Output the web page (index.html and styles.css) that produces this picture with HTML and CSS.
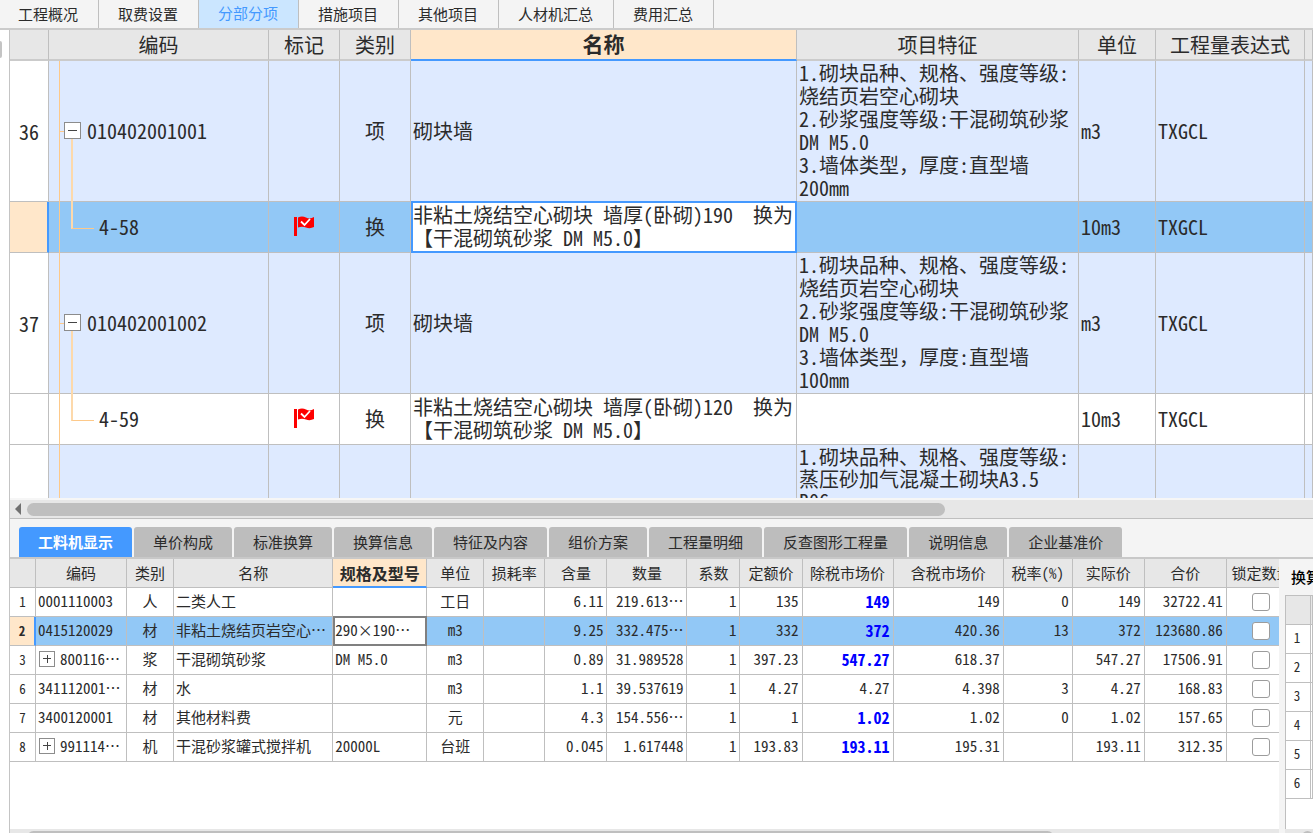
FILE: index.html
```html
<!DOCTYPE html>
<html lang="zh-CN">
<head>
<meta charset="utf-8">
<title>分部分项</title>
<link rel="stylesheet" href="styles.css">
</head>
<body>
<svg class="defs" width="0" height="0" aria-hidden="true">
  <symbol id="flag" viewBox="0 0 20 20">
    <path d="M0 1h3v19H0z" fill="#fe0000"/>
    <path d="M4 1.500Q8-.5 12 1.500T20 1V11Q16 13 12 11.500T4 11.500Z" fill="#fe0000"/>
    <path d="M7 5.500l3.500 3.500L16 3" fill="none" stroke="#fff" stroke-width="1.800"/>
  </symbol>
</svg>
<div class="app">
  <nav class="top-tabs">
    <button class="top-tab">工程概况</button>
    <button class="top-tab">取费设置</button>
    <button class="top-tab active">分部分项</button>
    <button class="top-tab">措施项目</button>
    <button class="top-tab">其他项目</button>
    <button class="top-tab">人材机汇总</button>
    <button class="top-tab">费用汇总</button>
  </nav>

  <div class="workspace">
    <aside class="gutter"><span class="grip"></span></aside>
    <main class="panes">
      <div class="items-view">
        <table class="grid items">
          <colgroup><col class="w-39"><col class="w-220"><col class="w-71"><col class="w-71"><col><col class="w-282"><col class="w-77"><col class="w-149"><col class="w-8"></colgroup>
          <thead><tr><th></th><th>编码</th><th>标记</th><th>类别</th><th class="current">名称</th><th>项目特征</th><th>单位</th><th>工程量表达式</th><th></th></tr></thead>
          <tbody>
            <tr class="tall group">
              <td class="num">36</td>
              <td class="tree parent"><div class="node"><button class="toggle minus" aria-label="折叠"></button>010402001001</div></td>
              <td></td><td class="mid">项</td><td>砌块墙</td>
              <td>1.砌块品种、规格、强度等级:<br>烧结页岩空心砌块<br>2.砂浆强度等级:干混砌筑砂浆<br>DM M5.0<br>3.墙体类型，厚度:直型墙<br>200mm</td>
              <td>m3</td><td>TXGCL</td><td></td>
            </tr>
            <tr class="short selected">
              <td class="num"></td>
              <td class="tree child">4-58</td>
              <td class="mid"><svg class="flag"><use href="#flag"/></svg></td><td class="mid">换</td>
              <td class="focus">非粘土烧结空心砌块 墙厚(卧砌)190&nbsp; 换为<br>【干混砌筑砂浆 DM M5.0】</td>
              <td></td><td>10m3</td><td>TXGCL</td><td></td>
            </tr>
            <tr class="tall group">
              <td class="num">37</td>
              <td class="tree parent"><div class="node"><button class="toggle minus" aria-label="折叠"></button>010402001002</div></td>
              <td></td><td class="mid">项</td><td>砌块墙</td>
              <td>1.砌块品种、规格、强度等级:<br>烧结页岩空心砌块<br>2.砂浆强度等级:干混砌筑砂浆<br>DM M5.0<br>3.墙体类型，厚度:直型墙<br>100mm</td>
              <td>m3</td><td>TXGCL</td><td></td>
            </tr>
            <tr class="short">
              <td class="num"></td>
              <td class="tree child">4-59</td>
              <td class="mid"><svg class="flag"><use href="#flag"/></svg></td><td class="mid">换</td>
              <td>非粘土烧结空心砌块 墙厚(卧砌)120&nbsp; 换为<br>【干混砌筑砂浆 DM M5.0】</td>
              <td></td><td>10m3</td><td>TXGCL</td><td></td>
            </tr>
            <tr class="tall group">
              <td class="num"></td><td class="tree"></td><td></td><td></td><td></td>
              <td class="top">1.砌块品种、规格、强度等级:<br>蒸压砂加气混凝土砌块A3.5<br>B06</td>
              <td></td><td></td><td></td>
            </tr>
          </tbody>
        </table>
      </div>
      <div class="scrollbar">
        <svg class="arrow" viewBox="0 0 6 12"><path d="M6 0v12L0 6z"/></svg>
        <span class="thumb items-thumb"></span>
      </div>

      <nav class="detail-tabs">
        <button class="detail-tab active">工料机显示</button>
        <button class="detail-tab">单价构成</button>
        <button class="detail-tab">标准换算</button>
        <button class="detail-tab">换算信息</button>
        <button class="detail-tab">特征及内容</button>
        <button class="detail-tab">组价方案</button>
        <button class="detail-tab">工程量明细</button>
        <button class="detail-tab">反查图形工程量</button>
        <button class="detail-tab">说明信息</button>
        <button class="detail-tab">企业基准价</button>
      </nav>

      <div class="detail">
        <section class="resources">
          <div class="resources-view">
            <table class="grid fine res">
              <colgroup><col class="w-26"><col class="w-91"><col class="w-47"><col class="w-159"><col class="w-94"><col class="w-57"><col class="w-61"><col class="w-62"><col class="w-80"><col class="w-53"><col class="w-62"><col class="w-91"><col class="w-110"><col class="w-69"><col class="w-72"><col class="w-82"><col class="w-70"></colgroup>
              <thead><tr><th></th><th>编码</th><th>类别</th><th>名称</th><th class="current">规格及型号</th><th>单位</th><th>损耗率</th><th>含量</th><th>数量</th><th>系数</th><th>定额价</th><th>除税市场价</th><th>含税市场价</th><th>税率(%)</th><th>实际价</th><th>合价</th><th>锁定数量</th></tr></thead>
              <tbody>
                <tr><td class="num">1</td><td>0001110003</td><td class="mid">人</td><td>二类人工</td><td></td><td class="mid">工日</td><td></td><td class="right">6.11</td><td class="right">219.613…</td><td class="right">1</td><td class="right">135</td><td class="right price">149</td><td class="right">149</td><td class="right">0</td><td class="right">149</td><td class="right">32722.41</td><td class="mid"><input type="checkbox" class="lock" aria-label="锁定数量"></td></tr>
                <tr class="selected"><td class="num">2</td><td>0415120029</td><td class="mid">材</td><td>非粘土烧结页岩空心…</td><td class="focus">290×190…</td><td class="mid">m3</td><td></td><td class="right">9.25</td><td class="right">332.475…</td><td class="right">1</td><td class="right">332</td><td class="right price">372</td><td class="right">420.36</td><td class="right">13</td><td class="right">372</td><td class="right">123680.86</td><td class="mid"><input type="checkbox" class="lock" aria-label="锁定数量"></td></tr>
                <tr><td class="num">3</td><td><div class="node"><button class="toggle plus" aria-label="展开"></button>800116…</div></td><td class="mid">浆</td><td>干混砌筑砂浆</td><td>DM M5.0</td><td class="mid">m3</td><td></td><td class="right">0.89</td><td class="right">31.989528</td><td class="right">1</td><td class="right">397.23</td><td class="right price">547.27</td><td class="right">618.37</td><td></td><td class="right">547.27</td><td class="right">17506.91</td><td class="mid"><input type="checkbox" class="lock" aria-label="锁定数量"></td></tr>
                <tr><td class="num">6</td><td>341112001…</td><td class="mid">材</td><td>水</td><td></td><td class="mid">m3</td><td></td><td class="right">1.1</td><td class="right">39.537619</td><td class="right">1</td><td class="right">4.27</td><td class="right">4.27</td><td class="right">4.398</td><td class="right">3</td><td class="right">4.27</td><td class="right">168.83</td><td class="mid"><input type="checkbox" class="lock" aria-label="锁定数量"></td></tr>
                <tr><td class="num">7</td><td>3400120001</td><td class="mid">材</td><td>其他材料费</td><td></td><td class="mid">元</td><td></td><td class="right">4.3</td><td class="right">154.556…</td><td class="right">1</td><td class="right">1</td><td class="right price">1.02</td><td class="right">1.02</td><td class="right">0</td><td class="right">1.02</td><td class="right">157.65</td><td class="mid"><input type="checkbox" class="lock" aria-label="锁定数量"></td></tr>
                <tr><td class="num">8</td><td><div class="node"><button class="toggle plus" aria-label="展开"></button>991114…</div></td><td class="mid">机</td><td>干混砂浆罐式搅拌机</td><td>20000L</td><td class="mid">台班</td><td></td><td class="right">0.045</td><td class="right">1.617448</td><td class="right">1</td><td class="right">193.83</td><td class="right price">193.11</td><td class="right">195.31</td><td></td><td class="right">193.11</td><td class="right">312.35</td><td class="mid"><input type="checkbox" class="lock" aria-label="锁定数量"></td></tr>
              </tbody>
            </table>
          </div>
          <div class="scrollbar clipped"><span class="thumb res-thumb"></span></div>
        </section>
        <section class="convert">
          <h2 class="convert-title">换算列表</h2>
          <div class="convert-view">
            <table class="grid fine conv">
              <colgroup><col class="w-25"><col></colgroup>
              <thead><tr><th></th><th></th></tr></thead>
              <tbody>
                <tr><td class="num">1</td><td></td></tr>
                <tr><td class="num">2</td><td></td></tr>
                <tr><td class="num">3</td><td></td></tr>
                <tr><td class="num">4</td><td></td></tr>
                <tr><td class="num">5</td><td></td></tr>
                <tr><td class="num">6</td><td></td></tr>
              </tbody>
            </table>
          </div>
          <div class="scrollbar clipped"><span class="thumb conv-thumb"></span></div>
        </section>
      </div>
    </main>
  </div>
</div>
</body>
</html>
```
FILE: styles.css
```css
* { box-sizing: border-box; }

body {
  margin: 0;
  color: #2b2b2b;
  background: #fff;
  font-family: "Noto Sans Mono CJK SC", "Noto Sans CJK SC", sans-serif;
}

button {
  margin: 0;
  border: 0;
  font: inherit;
  color: inherit;
  white-space: nowrap;
}

.defs { position: absolute; }

.app {
  display: flex;
  flex-direction: column;
  height: 100vh;
  overflow: hidden;
}

/* Top tabs */
.top-tabs {
  display: flex;
  flex: none;
  height: 30px;
  background: #f4f4f4;
  border-bottom: 2px solid #cbcbcb;
  font-family: "Noto Sans CJK SC", sans-serif;
  font-size: 15px;
  line-height: 26px;
}
.top-tab {
  padding: 0 20px 1px 19px;
  background: none;
  border-right: 1px solid #bfbfbf;
}
.top-tab:first-child { padding-left: 18px; }
.top-tab.active {
  color: #4499ff;
  background: #cbe6ff;
  padding-bottom: 3px;
}

/* Frame */
.workspace { display: flex; flex: 1; min-height: 0; }
.gutter { flex: none; width: 9px; padding-top: 11px; }
.grip { display: block; width: 2px; height: 17px; background: #c4c4c4; border-radius: 0 2px 2px 0; }
.panes {
  display: flex;
  flex: 1;
  flex-direction: column;
  min-width: 0;
  border-left: 1px solid #c4c4c4;
}

/* Grids */
.grid {
  table-layout: fixed;
  border-collapse: separate;
  border-spacing: 0;
  width: 100%;
}
.grid th, .grid td {
  position: relative;
  padding: 0 2px;
  border-right: 1px solid #bfbfbf;
  border-bottom: 1px solid #bfbfbf;
  white-space: nowrap;
  text-align: left;
  font-weight: 400;
}
.grid th { background: #e7e7e7; text-align: center; padding: 0; }
.grid th.current { background: #ffe7ca; border-bottom: 2px solid #4499ff; font-weight: 700; }
.grid .num, .grid .mid { text-align: center; }
.grid .right { text-align: right; padding-right: 3px; }
.grid .group td { background: #deeaff; }
.grid .selected td { background: #92c8f6; }
.grid tr td.num { background: #fff; }
.grid .selected td.num { background: #ffe7ca; border-right: 2px solid #4499ff; font-weight: 700; }
.grid .selected td.focus { background: #fff; }
.focus::after {
  content: "";
  position: absolute;
  inset: -1px -1px -1px 0;
  border: 2px solid #4499ff;
}

.items-view { flex: none; height: 468px; overflow: hidden; }
.items { font-size: 20px; line-height: 23px; }
.items th { height: 31px; padding-bottom: 1px; border-bottom: 2px solid #cbcbcb; }
.items th.current { padding-bottom: 2px; font-size: 21px; }
.items td { padding-bottom: 2px; }
.items .num { padding-bottom: 0; }
.items .top { padding: 1px 2px 0; line-height: 22px; vertical-align: top; }
.tall td { height: 141px; }
.short td { height: 51px; }

.fine { font-size: 15px; line-height: 20px; }
.fine th { height: 29px; }
.fine th.current { font-size: 16px; }
.fine td { height: 29px; padding-bottom: 3px; }
.fine .price { color: #0000ff; font-size: 16px; font-weight: 700; }
.fine .num { font-size: 13px; padding-bottom: 0; }
.fine .focus::after { border-color: #808080; }
.res { width: 1287px; }

.w-8 { width: 8px; }
.w-25 { width: 25px; }
.w-26 { width: 26px; }
.w-39 { width: 39px; }
.w-47 { width: 47px; }
.w-53 { width: 53px; }
.w-57 { width: 57px; }
.w-61 { width: 61px; }
.w-62 { width: 62px; }
.w-69 { width: 69px; }
.w-70 { width: 70px; }
.w-71 { width: 71px; }
.w-72 { width: 72px; }
.w-77 { width: 77px; }
.w-80 { width: 80px; }
.w-82 { width: 82px; }
.w-91 { width: 91px; }
.w-94 { width: 94px; }
.w-110 { width: 110px; }
.w-149 { width: 149px; }
.w-159 { width: 159px; }
.w-220 { width: 220px; }
.w-282 { width: 282px; }

/* Tree */
.node { display: flex; align-items: center; gap: 6px; }
.items .parent { padding-left: 15px; }
.items .child { padding-left: 50px; }
.items .tree::before {
  content: "";
  position: absolute;
  top: 0;
  bottom: -1px;
  left: 10px;
  width: 5px;
  background:
    linear-gradient(#fdc98a, #fdc98a) left / 1px 100% no-repeat;
}
.items .parent::before {
  background:
    linear-gradient(#fdc98a, #fdc98a) left / 1px 100% no-repeat,
    linear-gradient(#fdc98a, #fdc98a) left / 5px 1px no-repeat;
}
.items .parent::after {
  content: "";
  position: absolute;
  top: 78px;
  bottom: -1px;
  left: 22px;
  width: 2px;
  background: #fdd9ab;
}
.items .child::after {
  content: "";
  position: absolute;
  top: 0;
  left: 22px;
  width: 21px;
  height: 26px;
  border-left: 2px solid #fdd9ab;
  border-bottom: 1px solid #fdc98a;
}
.toggle {
  flex: none;
  width: 16px;
  height: 16px;
  padding: 0;
  border: 1px solid #8c8c8c;
  background: linear-gradient(#444, #444) center / 8px 1px no-repeat, #fff;
}
.items .toggle { width: 17px; height: 17px; background-size: 9px 1px, auto; }
.toggle.plus {
  background:
    linear-gradient(#444, #444) center / 8px 1px no-repeat,
    linear-gradient(#444, #444) center / 1px 8px no-repeat,
    #fff;
}
.fine .node { padding-left: 1px; gap: 5px; }
.flag { display: block; width: 20px; height: 20px; margin: 0 auto; }

/* Scrollbars */
.scrollbar {
  display: flex;
  flex: none;
  align-items: center;
  height: 21px;
  padding-left: 5px;
  gap: 6px;
  background: #e7e7e7;
  border-top: 2px solid #f6f6f6;
  border-bottom: 1px solid #bfbfbf;
}
.arrow { width: 6px; height: 12px; fill: #707070; }
.thumb { height: 13px; background: #bfbfbf; border-radius: 7px; }
.items-thumb { width: calc(100% - 380px); }
.scrollbar.clipped {
  height: 4px;
  padding: 2px 0 0 17px;
  border: 0;
  align-items: flex-start;
  overflow: hidden;
}
.res-thumb { width: 82%; }
.conv-thumb { width: 40px; }

/* Detail tabs */
.detail-tabs {
  display: flex;
  flex: none;
  gap: 2px;
  height: 40px;
  padding: 8px 0 0 9px;
  background: #f4f4f4;
  border-bottom: 2px solid #c8c8c8;
  font-family: "Noto Sans CJK SC", sans-serif;
  font-size: 15px;
  line-height: 30px;
}
.detail-tab {
  height: 30px;
  padding: 0 19px;
  background: #bdbdbd;
  border-radius: 3px 3px 0 0;
}
.detail-tab.active { background: #4499ff; color: #fff; font-weight: 700; }

.detail { display: flex; flex: 1; min-height: 0; background: #f4f4f4; gap: 6px; }
.resources { display: flex; flex-direction: column; flex: 1; min-width: 0; background: #fff; }
.resources-view { flex: 1; min-height: 0; overflow: hidden; }
.res td:last-child { padding-bottom: 0; }
.lock {
  appearance: none;
  display: block;
  width: 18px;
  height: 18px;
  margin: 0 auto;
  border: 1px solid #9c9c9c;
  border-radius: 3px;
  background: #fff;
}
.convert {
  display: flex;
  flex-direction: column;
  flex: none;
  width: 28px;
  overflow: hidden;
  background: #fff;
}
.convert-title {
  flex: none;
  height: 37px;
  margin: 0;
  padding-left: 6px;
  background: #f4f4f4;
  border-bottom: 1px solid #bfbfbf;
  color: #000;
  font-family: "Noto Sans CJK SC", sans-serif;
  font-size: 15px;
  font-weight: 500;
  line-height: 36px;
  white-space: nowrap;
  overflow: hidden;
}
.convert-view { flex: 1; min-height: 0; border-left: 1px solid #bfbfbf; overflow: hidden; }
.convert-view .num { padding-bottom: 2px; padding-right: 4px; }
```
